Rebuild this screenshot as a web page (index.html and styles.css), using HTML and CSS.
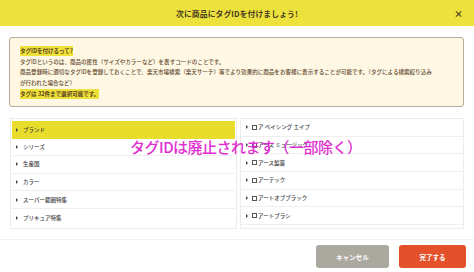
FILE: index.html
```html
<!DOCTYPE html>
<html lang="ja">
<head>
<meta charset="utf-8">
<link rel="stylesheet" href="styles.css">
</head>
<body>
<div class="modal">
  <div class="header">
    <span></span>
    <h1 class="title">次に商品にタグIDを付けましょう!</h1>
    <span class="close">×</span>
  </div>
  <div class="info">
    <p class="line"><span class="mark">タグIDを付けるって?</span></p>
    <p class="line">タグIDというのは、商品の属性（サイズやカラーなど）を表すコードのことです。</p>
    <p class="line">商品登録時に適切なタグIDを登録しておくことで、楽天市場検索（楽天サーチ）等でより効果的に商品をお客様に表示することが可能です。（タグによる検索絞り込み</p>
    <p class="line">が行われた場合など）</p>
    <p class="line"><span class="mark">タグは 32件まで選択可能です。</span></p>
  </div>
  <div class="panels">
    <ul class="list left">
      <li class="row active"><span class="arrow"></span>ブランド</li>
      <li class="row"><span class="arrow"></span>シリーズ</li>
      <li class="row"><span class="arrow"></span>生産国</li>
      <li class="row"><span class="arrow"></span>カラー</li>
      <li class="row"><span class="arrow"></span>スーパー範囲特集</li>
      <li class="row"><span class="arrow"></span>プリキュア特集</li>
    </ul>
    <ul class="list right">
      <li class="row"><span class="arrow"></span><span class="box"></span>ア ベイシング エイプ</li>
      <li class="row"><span class="arrow"></span><span class="box"></span>アース ミュージック</li>
      <li class="row"><span class="arrow"></span><span class="box"></span>アース製薬</li>
      <li class="row"><span class="arrow"></span><span class="box"></span>アーテック</li>
      <li class="row"><span class="arrow"></span><span class="box"></span>アートオブブラック</li>
      <li class="row"><span class="arrow"></span><span class="box"></span>アートブラシ</li>
      <li class="row"><span class="arrow"></span><span class="box"></span>アイ</li>
    </ul>
  </div>
  <div class="footer">
    <button class="btn cancel">キャンセル</button>
    <button class="btn done">完了する</button>
  </div>
  <div class="notice">タグIDは廃止されます（一部除く）</div>
</div>
</body>
</html>
```

FILE: styles.css
```css
* { box-sizing: border-box; }
html, body { margin: 0; padding: 0; background: #fff; }
body {
  width: 474px;
  height: 272px;
  overflow: hidden;
  font-family: "Noto Sans CJK JP", "Noto Sans", sans-serif;
  color: #5a4630;
}
.modal { position: relative; width: 474px; height: 272px; }
.header {
  height: 26px;
  background: #ece23b;
  display: grid;
  grid-template-columns: 1fr auto 1fr;
  align-items: center;
}
.title {
  margin: 0;
  font-size: 7.8px;
  font-weight: 700;
  color: #4a3a22;
  letter-spacing: 0.1px;
}
.close {
  justify-self: end;
  margin-right: 11px;
  font-size: 9px;
  font-weight: 700;
  color: #4a3a22;
  line-height: 1;
}
.info {
  margin: 11px 10px 0 9px;
  height: 70px;
  background: #fdf7e4;
  border: 1px solid #b8ab99;
  border-radius: 3px;
  padding: 8px 10px 0 10px;
}
.line {
  margin: 0;
  font-size: 5.55px;
  line-height: 10.7px;
  white-space: nowrap;
  color: #654a2e;
  font-weight: 500;
}
.mark {
  background: #eee23a;
  font-weight: 700;
  color: #5a4020;
  padding: 1px 0;
}
.panels {
  margin: 11px 10px 0 10px;
  display: grid;
  grid-template-columns: 227px 224px;
  column-gap: 3px;
}
.list {
  list-style: none;
  margin: 0;
  height: 111px;
  border: 1px solid #ececec;
  overflow: hidden;
}
.left { padding: 2px 1px; }
.right { padding: 0; }
.row {
  height: 17.6px;
  display: flex;
  align-items: center;
  font-size: 5.5px;
  font-weight: 500;
  color: #3e3e3e;
  border-bottom: 1px solid #efefef;
  padding-left: 4px;
}
.left .row:last-child { border-bottom: 0; }
.row.active { background: #e9dd2c; border-bottom: 0; }
.arrow {
  width: 0; height: 0;
  border-left: 2.5px solid #444;
  border-top: 2px solid transparent;
  border-bottom: 2px solid transparent;
  margin-right: 5px;
}
.right .row { padding-left: 5px; height: 17.7px; }
.right .arrow { margin-right: 4px; }
.box {
  width: 5px; height: 5px;
  border: 0.7px solid #555;
  margin-right: 1px;
}
.footer {
  margin-top: 10px;
  border-top: 1px solid #f1f1f1;
  display: flex;
  justify-content: flex-end;
  gap: 10px;
  padding: 5px 8px 0 0;
}
.btn {
  border: 0;
  border-radius: 3px;
  height: 23px;
  font-family: inherit;
  font-size: 6.5px;
  font-weight: 700;
  color: #fff;
}
.cancel { width: 73px; background: #aba8a0; }
.done { width: 67px; background: #e4502a; }
.notice {
  position: absolute;
  left: 130px;
  top: 137px;
  font-size: 15px;
  font-weight: 500;
  letter-spacing: -0.5px;
  line-height: 20px;
  color: #e02fd0;
  white-space: nowrap;
}
```
